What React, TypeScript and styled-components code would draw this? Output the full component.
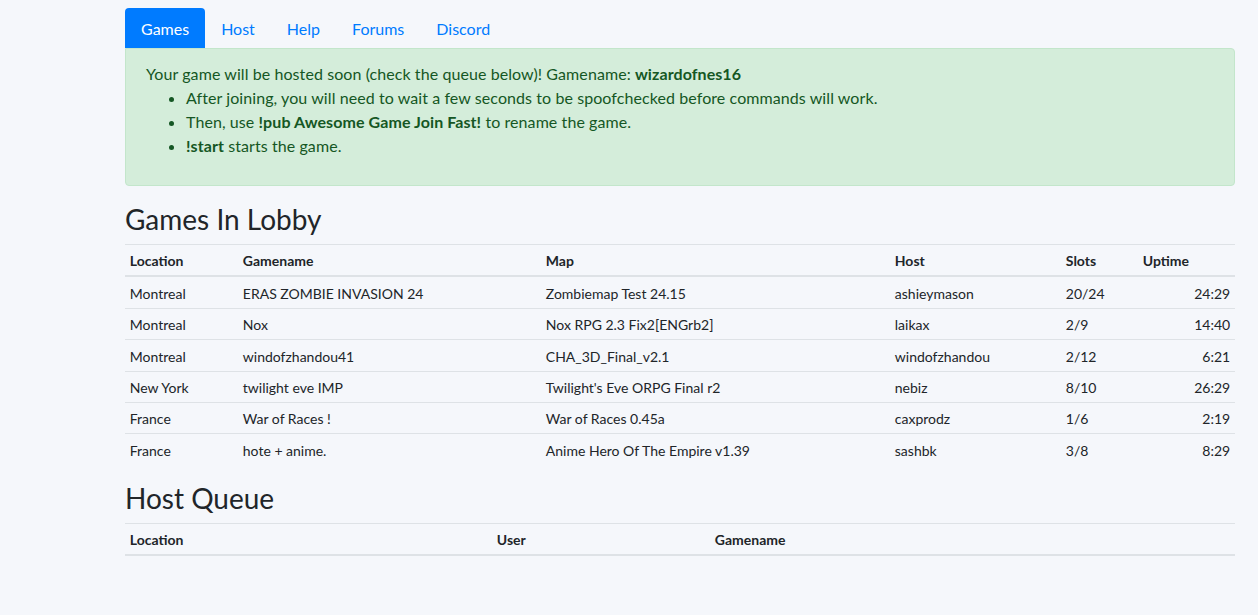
import styled, { createGlobalStyle } from "styled-components";

const GlobalStyle = createGlobalStyle`
  html, body {
    margin: 0;
    padding: 0;
    background: #f5f7fb;
  }
  body {
    font-family: "Segoe UI", Lato, "Liberation Sans", sans-serif;
    font-size: 16px;
    line-height: 1.5;
    color: #212529;
  }
  * { box-sizing: border-box; }
`;

const Page = styled.div`
  padding: 8px 0 40px 125px;
`;

const Container = styled.div`
  width: 1110px;
`;

const Nav = styled.ul`
  display: flex;
  list-style: none;
  margin: 0;
  padding: 0;
`;

const NavLink = styled.a<{ $active?: boolean }>`
  display: block;
  padding: 9px 16px 7px;
  line-height: 24px;
  border-radius: 4px 4px 0 0;
  color: ${(p) => (p.$active ? "#fff" : "#007bff")};
  background: ${(p) => (p.$active ? "#007bff" : "transparent")};
  text-decoration: none;
  cursor: pointer;
`;

const Alert = styled.div`
  padding: 13px 20px 11px;
  margin-bottom: 16px;
  background: #d4edda;
  border: 1px solid #c3e6cb;
  border-radius: 0 4px 4px 4px;
  color: #155724;
  letter-spacing: 0.08px;

  ul {
    margin: 0 0 16px;
    padding-left: 40px;
  }
  b { font-weight: 700; }
`;

const Heading = styled.h3`
  margin: 0 0 8px;
  padding-top: 1px;
  font-size: 28px;
  font-weight: 400;
  line-height: 33px;
`;

const Table = styled.table`
  width: 100%;
  table-layout: fixed;
  border-collapse: collapse;
  font-size: 14px;
  line-height: 21px;
  margin-bottom: 16px;

  th, td {
    padding: 5.4px 4.8px 4px;
    border-top: 1px solid #dee2e6;
    text-align: left;
    vertical-align: top;
  }
  thead th {
    font-weight: 700;
    border-bottom: 2px solid #dee2e6;
  }
`;

const Col = styled.col<{ $w?: number }>`
  width: ${(p) => (p.$w ? `${p.$w}px` : "auto")};
`;

const Cell = styled.td<{ $right?: boolean }>`
  && { text-align: ${(p) => (p.$right ? "right" : "left")}; }
`;

type Game = {
  location: string;
  name: string;
  map: string;
  host: string;
  slots: string;
  uptime: string;
};

const games: Game[] = [
  { location: "Montreal", name: "ERAS ZOMBIE INVASION 24", map: "Zombiemap Test 24.15", host: "ashieymason", slots: "20/24", uptime: "24:29" },
  { location: "Montreal", name: "Nox", map: "Nox RPG 2.3 Fix2[ENGrb2]", host: "laikax", slots: "2/9", uptime: "14:40" },
  { location: "Montreal", name: "windofzhandou41", map: "CHA_3D_Final_v2.1", host: "windofzhandou", slots: "2/12", uptime: "6:21" },
  { location: "New York", name: "twilight eve IMP", map: "Twilight's Eve ORPG Final r2", host: "nebiz", slots: "8/10", uptime: "26:29" },
  { location: "France", name: "War of Races !", map: "War of Races 0.45a", host: "caxprodz", slots: "1/6", uptime: "2:19" },
  { location: "France", name: "hote + anime.", map: "Anime Hero Of The Empire v1.39", host: "sashbk", slots: "3/8", uptime: "8:29" },
];

const tabs = ["Games", "Host", "Help", "Forums", "Discord"];
const lobbyCols = [113, 303, 349, 171, 77, 97];
const queueCols = [367, 218, 0];

export default function App() {
  return (
    <>
      <GlobalStyle />
      <Page>
        <Container>
          <Nav>
            {tabs.map((t, i) => (
              <li key={t}>
                <NavLink $active={i === 0}>{t}</NavLink>
              </li>
            ))}
          </Nav>
          <Alert>
            Your game will be hosted soon (check the queue below)! Gamename: <b>wizardofnes16</b>
            <ul>
              <li>After joining, you will need to wait a few seconds to be spoofchecked before commands will work.</li>
              <li>Then, use <b>!pub Awesome Game Join Fast!</b> to rename the game.</li>
              <li><b>!start</b> starts the game.</li>
            </ul>
          </Alert>

          <Heading>Games In Lobby</Heading>
          <Table>
            <colgroup>
              {lobbyCols.map((w, i) => <Col key={i} $w={w} />)}
            </colgroup>
            <thead>
              <tr>
                <th>Location</th>
                <th>Gamename</th>
                <th>Map</th>
                <th>Host</th>
                <th>Slots</th>
                <th>Uptime</th>
              </tr>
            </thead>
            <tbody>
              {games.map((g) => (
                <tr key={g.name}>
                  <Cell>{g.location}</Cell>
                  <Cell>{g.name}</Cell>
                  <Cell>{g.map}</Cell>
                  <Cell>{g.host}</Cell>
                  <Cell>{g.slots}</Cell>
                  <Cell $right>{g.uptime}</Cell>
                </tr>
              ))}
            </tbody>
          </Table>

          <Heading>Host Queue</Heading>
          <Table>
            <colgroup>
              {queueCols.map((w, i) => <Col key={i} $w={w} />)}
            </colgroup>
            <thead>
              <tr>
                <th>Location</th>
                <th>User</th>
                <th>Gamename</th>
              </tr>
            </thead>
          </Table>
        </Container>
      </Page>
    </>
  );
}
